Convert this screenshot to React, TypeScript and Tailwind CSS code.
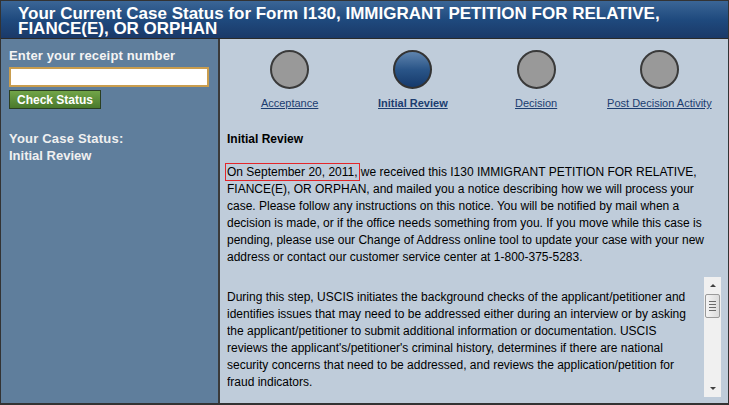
import React from 'react';

const steps = [
  { label: 'Acceptance', active: false },
  { label: 'Initial Review', active: true },
  { label: 'Decision', active: false },
  { label: 'Post Decision Activity', active: false },
];

const detailLines = [
  'During this step, USCIS initiates the background checks of the applicant/petitioner and',
  'identifies issues that may need to be addressed either during an interview or by asking',
  'the applicant/petitioner to submit additional information or documentation. USCIS',
  "reviews the applicant's/petitioner's criminal history, determines if there are national",
  'security concerns that need to be addressed, and reviews the application/petition for',
  'fraud indicators.',
];

function FakeScrollbar() {
  return (
    <div className="w-[17px] shrink-0 bg-[#f0f0f0] flex flex-col items-center">
      <div className="h-[17px] w-full flex items-center justify-center">
        <div className="w-0 h-0 border-l-[3px] border-r-[3px] border-b-[3px] border-l-transparent border-r-transparent border-b-[#404040]" />
      </div>
      <div className="w-[15px] h-[24px] rounded-[2px] border border-[#9a9a9a] bg-gradient-to-r from-[#f4f4f4] to-[#dcdcdc] flex flex-col items-center justify-center gap-[2px]">
        <div className="w-[7px] h-px bg-[#6a6a6a]" />
        <div className="w-[7px] h-px bg-[#6a6a6a]" />
        <div className="w-[7px] h-px bg-[#6a6a6a]" />
        <div className="w-[7px] h-px bg-[#6a6a6a]" />
      </div>
      <div className="flex-1" />
      <div className="h-[17px] w-full flex items-center justify-center">
        <div className="w-0 h-0 border-l-[3px] border-r-[3px] border-t-[3px] border-l-transparent border-r-transparent border-t-[#404040]" />
      </div>
    </div>
  );
}

export default function App() {
  return (
    <div
      className="w-[729px] h-[405px] border border-b-2 border-[#333] flex flex-col overflow-hidden"
      style={{ fontFamily: '"Liberation Sans", Arial, sans-serif' }}
    >
      {/* Header */}
      <div className="h-[38px] shrink-0 bg-gradient-to-b from-[#3b6696] via-[#1f4a7e] to-[#1a3968] pl-[17px] pt-[5px] border-b border-[#2a2a2a]">
        <h1 className="text-white font-bold text-[17px] leading-[15px]">
          Your Current Case Status for Form I130, IMMIGRANT PETITION FOR RELATIVE, FIANCE(E), OR ORPHAN
        </h1>
      </div>

      <div className="flex flex-1 min-h-0">
        {/* Sidebar */}
        <aside className="w-[219px] shrink-0 bg-[#5f7e9c] border-r-2 border-[#3a3a3a] pl-[8px] pt-[9px] text-white">
          <p className="font-bold text-[13px] leading-[16px] tracking-[0.15px] text-[#f4f4f4]">Enter your receipt number</p>
          <input
            type="text"
            className="mt-[3px] block w-[200px] h-[20px] bg-white border-2 border-[#c99d4e] outline-none"
          />
          <button className="mt-[3px] block w-[92px] h-[19px] border border-[#2b3f22] bg-gradient-to-b from-[#72a548] to-[#4a7a2c] text-white font-bold text-[12px] leading-[14px]">
            Check Status
          </button>
          <div className="mt-[21px] font-bold text-[13px] leading-[17px] text-[#f0f0f0]">
            <p className="tracking-[0.2px]">Your Case Status:</p>
            <p>Initial Review</p>
          </div>
        </aside>

        {/* Main */}
        <main className="flex-1 min-w-0 bg-[#bfccda] pt-[11px] pl-[7px] pr-[7px] text-black">
          <div className="grid grid-cols-4 pl-px">
            {steps.map((s) => (
              <div key={s.label} className="flex flex-col items-center">
                <div
                  className={
                    s.active
                      ? 'w-[39px] h-[39px] rounded-full border-2 border-[#333] bg-gradient-to-b from-[#5f84ad] via-[#2a5588] to-[#163a6c]'
                      : 'w-[39px] h-[39px] rounded-full border-2 border-[#3a3a3a] bg-[#999999]'
                  }
                />
                <a
                  href="#"
                  className={
                    'mt-[8px] text-[11px] leading-[13px] underline text-[#1c3d70] ' + (s.active ? 'font-bold' : '')
                  }
                >
                  {s.label}
                </a>
              </div>
            ))}
          </div>

          <h2 className="mt-[21px] font-bold text-[12px] leading-[17px]">Initial Review</h2>

          <p className="mt-[16px] text-[12px] leading-[17px] pr-[1px]">
            <span className="outline outline-1 outline-offset-1 outline-[#e3262a]">On September 20, 2011,</span> we
            received this I130 IMMIGRANT PETITION FOR RELATIVE, FIANCE(E), OR ORPHAN, and mailed you a notice
            describing how we will process your case. Please follow any instructions on this notice. You will be
            notified by mail when a decision is made, or if the office needs something from you. If you move while
            this case is pending, please use our Change of Address online tool to update your case with your new
            address or contact our customer service center at 1-800-375-5283.
          </p>

          <div className="mt-[11px] h-[120px] flex">
            <div className="flex-1 min-w-0 overflow-hidden pt-[12px] pr-[2px] text-[12px] leading-[17px]">
              {detailLines.map((line) => (
                <div key={line} className="whitespace-nowrap">
                  {line}
                </div>
              ))}
            </div>
            <FakeScrollbar />
          </div>
        </main>
      </div>
    </div>
  );
}
